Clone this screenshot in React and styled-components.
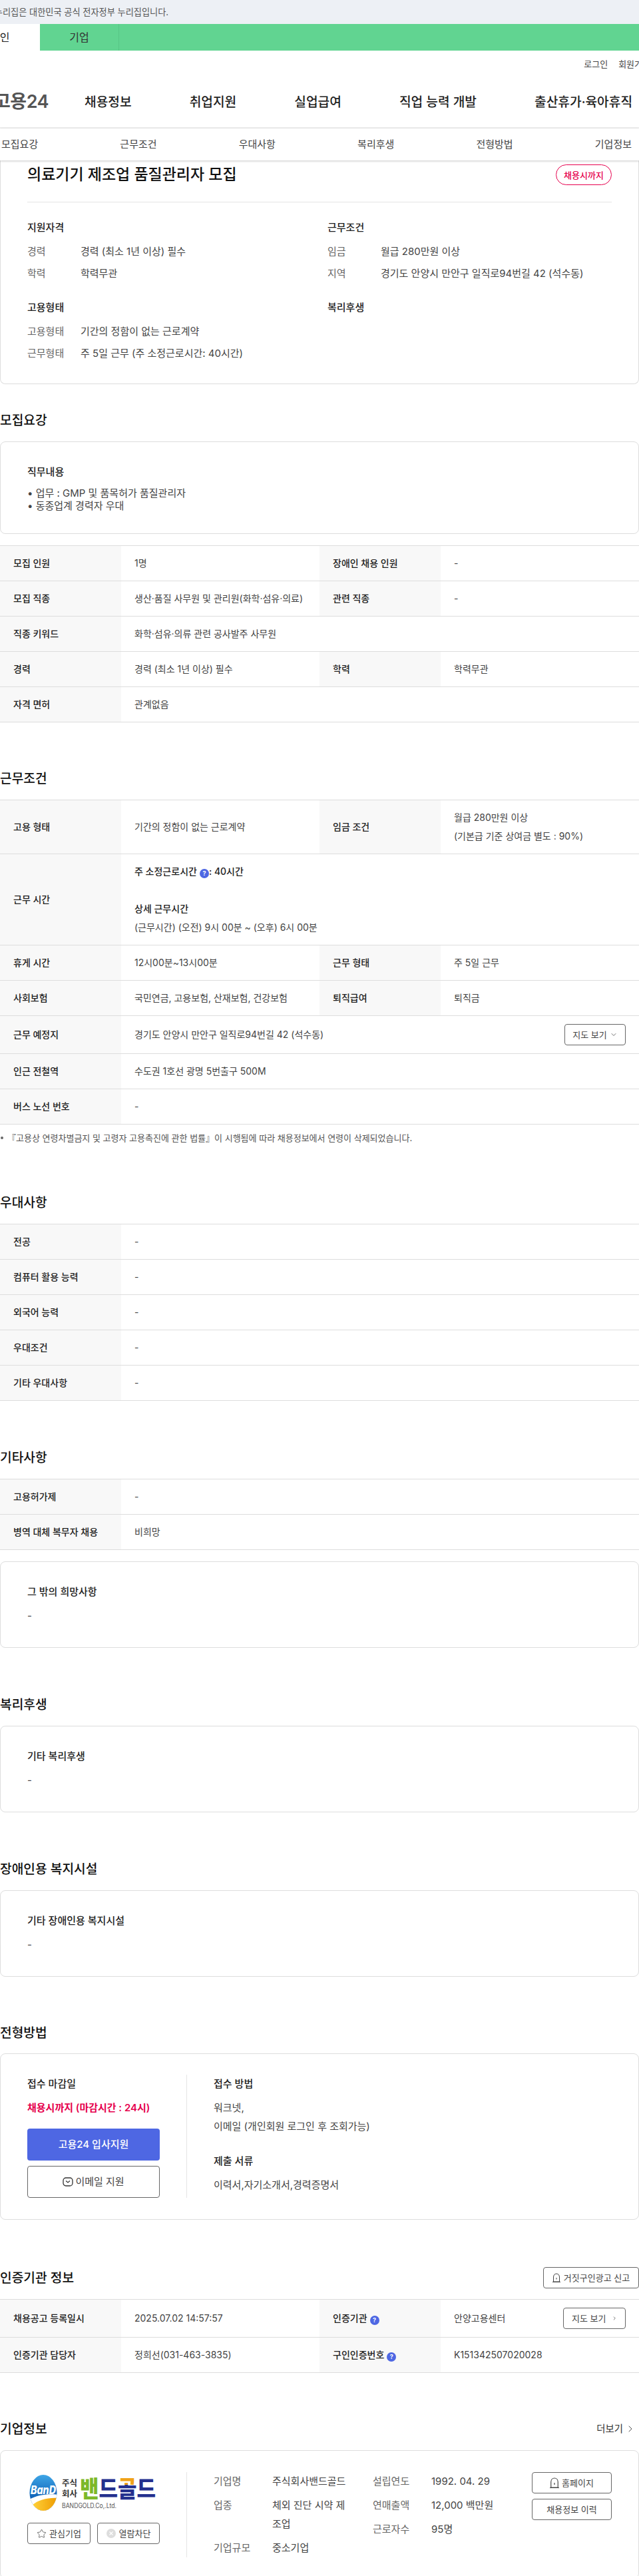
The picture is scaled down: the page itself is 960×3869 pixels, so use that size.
import React from 'react';
import styled, { createGlobalStyle } from 'styled-components';
import { ChevronDown, ChevronRight, Star } from 'lucide-react';

const Global = createGlobalStyle`
  html, body { margin: 0; padding: 0; background: #fff; overflow-x: hidden; }
  body { font-family: Inter, "Noto Sans CJK KR", "Noto Sans", sans-serif; color: #333; font-size: 14px; line-height: 28px; }
  * { box-sizing: border-box; }
`;

const Page = styled.div`width: 960px; overflow: hidden;`;
const NoticeBar = styled.div`
  height: 36px; background: #edf0f5; color: #555; font-size: 13.2px; line-height: 36px;
  margin: 0; padding: 0; white-space: nowrap;
`;
const NoticeText = styled.span`display: inline-block; margin-left: -24px;`;
const GreenBar = styled.div`height: 40px; background: #61d491; display: flex; line-height: 40px; font-size: 16px;`;
const PersonTab = styled.div`width: 60px; background: #fff; color: #222; white-space: nowrap; overflow: hidden; padding-left: 0;`;
const PersonText = styled.span`display: inline-block; margin-left: -15px;`;
const CompanyTab = styled.div`width: 119px; text-align: center; color: #333; border-right: 1px solid #57c585;`;
const Utility = styled.div`height: 40px; display: flex; align-items: center; justify-content: flex-end; gap: 16px; font-size: 13px; color: #444; white-space: nowrap; margin-right: -17px;`;
const Header = styled.header`
  height: 77px; display: flex; align-items: center; border-bottom: 2px solid #eee; overflow: hidden; white-space: nowrap; padding-bottom: 1px;
`;
const Logo = styled.div`font-size: 27px; font-weight: 600; color: #555; margin-left: -9px; width: 136px; letter-spacing: -0.5px;`;
const MainNav = styled.nav`display: flex; gap: 87px; font-size: 19.2px; font-weight: 500; color: #222;`;
const SubNav = styled.nav`
  position: relative; z-index: 2; height: 48px; background: #fff; display: flex; justify-content: space-between; align-items: center;
  padding: 0 11px 0 2px; font-size: 15px; color: #444; box-shadow: 0 1px 3px rgba(0,0,0,.22);
`;
const SummaryCard = styled.section`
  border: 1px solid #ddd; border-top: none; border-radius: 0 0 8px 8px; padding: 6px 40px 31px; height: 336px;
`;
const TitleRow = styled.div`display: flex; justify-content: space-between; align-items: center; padding-bottom: 25px; border-bottom: 1px solid #e5e5e5;`;
const JobTitle = styled.h1`margin: 0; font-size: 23px; line-height: 31px; font-weight: 500; color: #111;`;
const Badge = styled.span`
  width: 84px; height: 31px; border: 1px solid #e6004d; border-radius: 16px; color: #e6004d; font-size: 13px; font-weight: 500;
  display: flex; align-items: center; justify-content: center;
`;
const SummaryGrid = styled.div`display: grid; grid-template-columns: 451px 1fr; row-gap: 23px; padding-top: 24px; font-size: 15px;`;
const SummaryHead = styled.h3`margin: 0 0 8px; font-size: 15px; line-height: 28px; font-weight: 500; color: #222;`;
const SummaryRow = styled.div`display: flex; color: #444; margin-bottom: 5px; &:last-child { margin-bottom: 0; }`;
const SummaryLabel = styled.span`width: 80px; flex: none; color: #666;`;
const Section = styled.section`padding-top: ${p => p.$top ?? 69}px;`;
const SectionHead = styled.div`height: 32px; margin-bottom: ${p => p.$mb ?? 16}px; display: flex; align-items: center; justify-content: space-between;`;
const SectionTitle = styled.h2`margin: 0; font-size: 19.2px; font-weight: 500; color: #111; line-height: 32px;`;
const Card = styled.div`
  border: 1px solid #ddd; border-radius: 8px; padding: 31px 40px ${p => p.$bottom ?? 33}px; margin-bottom: ${p => p.$mb ?? 0}px; font-size: 15px;
`;
const CardHead = styled.h3`margin: 0 0 8px; font-size: 15px; line-height: 28px; font-weight: 500; color: #222;`;
const CardText = styled.div`color: #444; line-height: ${p => p.$lh ?? 28}px;`;
const Table = styled.table`
  width: 960px; table-layout: fixed; border-collapse: collapse; border-top: 1px solid #ddd; margin-bottom: ${p => p.$mb ?? 0}px;
  font-size: 14px;
`;
const Th = styled.th`
  background: #f8f8f8; text-align: left; font-weight: 500; color: #222; padding: 12px 20px; border-bottom: 1px solid #ddd; line-height: 28px; white-space: nowrap;
`;
const Td = styled.td`color: #444; padding: 12px 20px; border-bottom: 1px solid #ddd; line-height: 28px; white-space: nowrap;`;
const CellFlex = styled.div`display: flex; align-items: center; justify-content: space-between;`;
const Strong = styled.div`font-weight: 500; color: #222;`;
const Help = styled.span`
  display: inline-block; width: 14px; height: 14px; border-radius: 50%; background: #4e67e3; color: #fff; font-size: 9px; font-weight: 700; line-height: 14px;
  text-align: center; vertical-align: -1px; margin: 0 ${p => p.$after ?? 0}px 0 4px;
`;
const SmallBtn = styled.button`
  height: 32px; padding: 0 ${p => p.$pad ?? 12}px; width: ${p => (p.$w ? p.$w + 'px' : 'auto')}; background: #fff; border: 1px solid #666; border-radius: 4px; color: #444;
  font: inherit; font-size: 13px; line-height: 30px; display: inline-flex; align-items: center; justify-content: center; gap: ${p => p.$gap ?? 4}px; white-space: nowrap; flex: none;
`;
const Note = styled.p`margin: 8px 0 0; font-size: 13px; line-height: 24px; color: #555; white-space: nowrap; display: flex; gap: 6px; align-items: center;`;
const Dot = styled.i`width: 4px; height: 4px; border-radius: 50%; background: #666; margin-left: 1px; flex: none;`;

const ApplyLayout = styled.div`display: flex; font-size: 15px;`;
const ApplyLeft = styled.div`width: 240px; padding-right: 40px; border-right: 1px solid #e5e5e5; flex: none; box-sizing: border-box;`;
const ApplyRight = styled.div`padding-left: 40px;`;
const Deadline = styled.div`color: #e6004d; font-weight: 600; margin-bottom: 17px; white-space: nowrap;`;
const PrimaryBtn = styled.button`
  width: 199px; height: 48px; background: #4e67e3; color: #fff; border: none; border-radius: 4px; font: inherit; font-weight: 500; font-size: 15px; display: block; margin-bottom: 8px;
`;
const OutlineBtn = styled.button`
  width: 199px; height: 48px; background: #fff; color: #444; border: 1px solid #666; border-radius: 4px; font: inherit; font-size: 15px; display: flex; align-items: center; justify-content: center; gap: 3px;
`;
const GapHead = styled(CardHead)`margin-top: ${p => p.$mt ?? 0}px;`;

const CompanyCard = styled.div`border: 1px solid #ddd; border-radius: 8px; padding: 32px 40px 31px; display: flex; font-size: 15px; height: 193px;`;
const CompanyLeft = styled.div`width: 240px; padding-right: 40px; border-right: 1px solid #e5e5e5; flex: none;`;
const LogoImg = styled.svg`display: block; width: 192px; height: 56px; margin: 4px 0 16px 3px;`;
const BtnRow = styled.div`display: flex; justify-content: space-between;`;
const InfoGrid = styled.div`padding-left: 40px; display: flex; gap: 40px; flex: none;`;
const InfoCol = styled.dl`margin: 0; display: grid; grid-template-columns: 88px 111px; row-gap: 8px; align-content: start;`;
const InfoLabel = styled.dt`color: #666;`;
const InfoValue = styled.dd`margin: 0; color: #444; word-break: break-all;`;
const CompanyBtns = styled.div`margin-left: auto; display: flex; flex-direction: column; gap: 8px;`;
const MoreLink = styled.span`font-size: 14.4px; color: #333; display: flex; align-items: center; gap: 3px; margin-right: 5px;`;

const HomeIcon = ({ h = 14, w = 12 }) => (
  <svg width={w} height={h} viewBox="0 0 12 14" fill="none" stroke="#444" strokeWidth="1">
    <path d="M1.5 13V6C1.5 3 3.5 1 6 1s4.5 2 4.5 5v7z" strokeLinejoin="round" />
    <path d="M0 13.4h12M6 7v2.5" />
  </svg>
);
const MailIcon = () => (
  <svg width="16" height="16" viewBox="0 0 16 16" fill="none" stroke="#333" strokeWidth="1.3">
    <rect x="1" y="2" width="14" height="12" rx="4" />
    <path d="M5 6.5l3 2.4 3-2.4" />
  </svg>
);
const BlockIcon = () => (
  <svg width="14" height="14" viewBox="0 0 14 14">
    <circle cx="7" cy="7" r="7" fill="#ddd" />
    <path d="M4.5 4.5l5 5M9.5 4.5l-5 5" stroke="#fff" strokeWidth="1.2" />
  </svg>
);
const BrandLogo = () => (
  <LogoImg viewBox="0 0 192 56">
    <defs>
      <linearGradient id="ball" x1="0" y1="0" x2="0" y2="1">
        <stop offset="0" stopColor="#3fa6e6" /><stop offset=".62" stopColor="#0f62b8" />
      </linearGradient>
      <linearGradient id="yolk" x1="0" y1="0" x2="1" y2="0">
        <stop offset="0" stopColor="#ffd23a" /><stop offset="1" stopColor="#ee9a00" />
      </linearGradient>
      <linearGradient id="ban" x1="0" y1="0" x2="1" y2="0">
        <stop offset=".5" stopColor="#7cb82a" /><stop offset=".5" stopColor="#24308e" />
      </linearGradient>
      <linearGradient id="gol" x1="0" y1="0" x2="0" y2="1">
        <stop offset=".36" stopColor="#f0a21a" /><stop offset=".36" stopColor="#24308e" />
      </linearGradient>
      <clipPath id="egg"><ellipse cx="21" cy="27" rx="20.5" ry="27" /></clipPath>
    </defs>
    <g clipPath="url(#egg)">
      <rect width="42" height="56" fill="url(#ball)" />
      <path d="M-2 38C12 30 28 28 44 30V56H-2z" fill="#fff" />
      <path d="M4 46C14 37 28 34 44 35V56H4z" fill="url(#yolk)" />
    </g>
    <text x="2" y="29" fill="#fff" fontFamily="Inter, sans-serif" fontSize="17" fontWeight="800" fontStyle="italic" textLength="38" lengthAdjust="spacingAndGlyphs">BanD</text>
    <text x="49" y="17" fill="#333" fontSize="12" fontWeight="700" textLength="23" lengthAdjust="spacingAndGlyphs">주식</text>
    <text x="49" y="33" fill="#333" fontSize="12" fontWeight="700" textLength="23" lengthAdjust="spacingAndGlyphs">회사</text>
    <text x="76" y="34" fontSize="35" fontWeight="900" textLength="114" lengthAdjust="spacingAndGlyphs">
      <tspan fill="url(#ban)">밴</tspan><tspan fill="#24308e">드</tspan><tspan fill="url(#gol)">골</tspan><tspan fill="#24308e">드</tspan>
    </text>
    <text x="49" y="50" fill="#555" fontSize="10" textLength="82" lengthAdjust="spacingAndGlyphs">BANDGOLD.Co,.Ltd.</text>
  </LogoImg>
);

const Cols = () => (
  <colgroup>
    <col width="182" /><col width="298" /><col width="182" /><col width="298" />
  </colgroup>
);
const Row4 = ({ a, b, c, d }) => (
  <tr><Th>{a}</Th><Td>{b}</Td><Th>{c}</Th><Td>{d}</Td></tr>
);
const Row2 = ({ a, b }) => (
  <tr><Th>{a}</Th><Td colSpan={3}>{b}</Td></tr>
);

export default function App() {
  return (
    <Page>
      <Global />
      <NoticeBar><NoticeText>이 누리집은 대한민국 공식 전자정부 누리집입니다.</NoticeText></NoticeBar>
      <GreenBar>
        <PersonTab><PersonText>개인</PersonText></PersonTab>
        <CompanyTab>기업</CompanyTab>
      </GreenBar>
      <Utility><span>로그인</span><span>회원가입</span></Utility>
      <Header>
        <Logo>고용24</Logo>
        <MainNav>
          <span>채용정보</span><span>취업지원</span><span>실업급여</span><span>직업 능력 개발</span><span>출산휴가·육아휴직</span>
        </MainNav>
      </Header>
      <SubNav>
        <span>모집요강</span><span>근무조건</span><span>우대사항</span><span>복리후생</span><span>전형방법</span><span>기업정보</span>
      </SubNav>

      <SummaryCard>
        <TitleRow>
          <JobTitle>의료기기 제조업 품질관리자 모집</JobTitle>
          <Badge>채용시까지</Badge>
        </TitleRow>
        <SummaryGrid>
          <div>
            <SummaryHead>지원자격</SummaryHead>
            <SummaryRow><SummaryLabel>경력</SummaryLabel>경력 (최소 1년 이상) 필수</SummaryRow>
            <SummaryRow><SummaryLabel>학력</SummaryLabel>학력무관</SummaryRow>
          </div>
          <div>
            <SummaryHead>근무조건</SummaryHead>
            <SummaryRow><SummaryLabel>임금</SummaryLabel>월급 280만원 이상</SummaryRow>
            <SummaryRow><SummaryLabel>지역</SummaryLabel>경기도 안양시 만안구 일직로94번길 42 (석수동)</SummaryRow>
          </div>
          <div>
            <SummaryHead>고용형태</SummaryHead>
            <SummaryRow><SummaryLabel>고용형태</SummaryLabel>기간의 정함이 없는 근로계약</SummaryRow>
            <SummaryRow><SummaryLabel>근무형태</SummaryLabel>주 5일 근무 (주 소정근로시간: 40시간)</SummaryRow>
          </div>
          <div>
            <SummaryHead>복리후생</SummaryHead>
          </div>
        </SummaryGrid>
      </SummaryCard>

      <Section $top={38}>
        <SectionHead><SectionTitle>모집요강</SectionTitle></SectionHead>
        <Card $bottom={32} $mb={17}>
          <CardHead>직무내용</CardHead>
          <CardText $lh={19}>• 업무 : GMP 및 품목허가 품질관리자<br />• 동종업계 경력자 우대</CardText>
        </Card>
        <Table>
          <Cols />
          <tbody>
            <Row4 a="모집 인원" b="1명" c="장애인 채용 인원" d="-" />
            <Row4 a="모집 직종" b="생산·품질 사무원 및 관리원(화학·섬유·의료)" c="관련 직종" d="-" />
            <Row2 a="직종 키워드" b="화학·섬유·의류 관련 공사발주 사무원" />
            <Row4 a="경력" b="경력 (최소 1년 이상) 필수" c="학력" d="학력무관" />
            <Row2 a="자격 면허" b="관계없음" />
          </tbody>
        </Table>
      </Section>

      <Section $top={68}>
        <SectionHead><SectionTitle>근무조건</SectionTitle></SectionHead>
        <Table>
          <Cols />
          <tbody>
            <Row4 a="고용 형태" b="기간의 정함이 없는 근로계약" c="임금 조건" d={<>월급 280만원 이상<br />(기본급 기준 상여금 별도 : 90%)</>} />
            <Row2 a="근무 시간" b={<>
              <Strong>주 소정근로시간<Help>?</Help>: 40시간</Strong>
              <br />
              <Strong>상세 근무시간</Strong>
              (근무시간) (오전) 9시 00분 ~ (오후) 6시 00분
            </>} />
            <Row4 a="휴게 시간" b="12시00분~13시00분" c="근무 형태" d="주 5일 근무" />
            <Row4 a="사회보험" b="국민연금, 고용보험, 산재보험, 건강보험" c="퇴직급여" d="퇴직금" />
            <Row2 a="근무 예정지" b={
              <CellFlex>경기도 안양시 만안구 일직로94번길 42 (석수동)<SmallBtn $w={92} $pad={8}>지도 보기 <ChevronDown size={12} strokeWidth={1.5} /></SmallBtn></CellFlex>
            } />
            <Row2 a="인근 전철역" b="수도권 1호선 광명 5번출구 500M" />
            <Row2 a="버스 노선 번호" b="-" />
          </tbody>
        </Table>
        <Note><Dot />『고용상 연령차별금지 및 고령자 고용촉진에 관한 법률』이 시행됨에 따라 채용정보에서 연령이 삭제되었습니다.</Note>
      </Section>

      <Section $top={69}>
        <SectionHead><SectionTitle>우대사항</SectionTitle></SectionHead>
        <Table>
          <Cols />
          <tbody>
            <Row2 a="전공" b="-" />
            <Row2 a="컴퓨터 활용 능력" b="-" />
            <Row2 a="외국어 능력" b="-" />
            <Row2 a="우대조건" b="-" />
            <Row2 a="기타 우대사항" b="-" />
          </tbody>
        </Table>
      </Section>

      <Section>
        <SectionHead><SectionTitle>기타사항</SectionTitle></SectionHead>
        <Table $mb={17}>
          <Cols />
          <tbody>
            <Row2 a="고용허가제" b="-" />
            <Row2 a="병역 대체 복무자 채용" b="비희망" />
          </tbody>
        </Table>
        <Card>
          <CardHead>그 밖의 희망사항</CardHead>
          <CardText>-</CardText>
        </Card>
      </Section>

      <Section>
        <SectionHead><SectionTitle>복리후생</SectionTitle></SectionHead>
        <Card>
          <CardHead>기타 복리후생</CardHead>
          <CardText>-</CardText>
        </Card>
      </Section>

      <Section>
        <SectionHead><SectionTitle>장애인용 복지시설</SectionTitle></SectionHead>
        <Card>
          <CardHead>기타 장애인용 복지시설</CardHead>
          <CardText>-</CardText>
        </Card>
      </Section>

      <Section $top={68}>
        <SectionHead $mb={15}><SectionTitle>전형방법</SectionTitle></SectionHead>
        <Card $bottom={32}>
          <ApplyLayout>
            <ApplyLeft>
              <CardHead>접수 마감일</CardHead>
              <Deadline>채용시까지 (마감시간 : 24시)</Deadline>
              <PrimaryBtn>고용24 입사지원</PrimaryBtn>
              <OutlineBtn><MailIcon />이메일 지원</OutlineBtn>
            </ApplyLeft>
            <ApplyRight>
              <CardHead>접수 방법</CardHead>
              <CardText>워크넷,<br />이메일 (개인회원 로그인 후 조회가능)</CardText>
              <GapHead $mt={24}>제출 서류</GapHead>
              <CardText>이력서,자기소개서,경력증명서</CardText>
            </ApplyRight>
          </ApplyLayout>
        </Card>
      </Section>

      <Section $top={71}>
        <SectionHead>
          <SectionTitle>인증기관 정보</SectionTitle>
          <SmallBtn $w={144} $pad={6} $gap={5}><HomeIcon />거짓구인광고 신고</SmallBtn>
        </SectionHead>
        <Table>
          <Cols />
          <tbody>
            <tr>
              <Th>채용공고 등록일시</Th>
              <Td>2025.07.02 14:57:57</Td>
              <Th>인증기관<Help>?</Help></Th>
              <Td><CellFlex>안양고용센터<SmallBtn $w={94} $gap={8}>지도 보기 <ChevronRight size={12} strokeWidth={2} /></SmallBtn></CellFlex></Td>
            </tr>
            <tr>
              <Th>인증기관 담당자</Th>
              <Td>정희선(031-463-3835)</Td>
              <Th>구인인증번호<Help>?</Help></Th>
              <Td>K151342507020028</Td>
            </tr>
          </tbody>
        </Table>
      </Section>

      <Section $top={68}>
        <SectionHead>
          <SectionTitle>기업정보</SectionTitle>
          <MoreLink>더보기 <ChevronRight size={16} strokeWidth={1.3} /></MoreLink>
        </SectionHead>
        <CompanyCard>
          <CompanyLeft>
            <BrandLogo />
            <BtnRow>
              <SmallBtn $w={95} $pad={4} $gap={4}><Star size={15} strokeWidth={1.2} />관심기업</SmallBtn>
              <SmallBtn $w={94} $pad={4} $gap={5}><BlockIcon />열람차단</SmallBtn>
            </BtnRow>
          </CompanyLeft>
          <InfoGrid>
            <InfoCol>
              <InfoLabel>기업명</InfoLabel><InfoValue>주식회사밴드골드</InfoValue>
              <InfoLabel>업종</InfoLabel><InfoValue>체외 진단 시약 제조업</InfoValue>
              <InfoLabel>기업규모</InfoLabel><InfoValue>중소기업</InfoValue>
            </InfoCol>
            <InfoCol>
              <InfoLabel>설립연도</InfoLabel><InfoValue>1992. 04. 29</InfoValue>
              <InfoLabel>연매출액</InfoLabel><InfoValue>12,000 백만원</InfoValue>
              <InfoLabel>근로자수</InfoLabel><InfoValue>95명</InfoValue>
            </InfoCol>
          </InfoGrid>
          <CompanyBtns>
            <SmallBtn $w={120} $gap={4}><HomeIcon h={18} w={14} />홈페이지</SmallBtn>
            <SmallBtn $w={120}>채용정보 이력</SmallBtn>
          </CompanyBtns>
        </CompanyCard>
      </Section>
    </Page>
  );
}
